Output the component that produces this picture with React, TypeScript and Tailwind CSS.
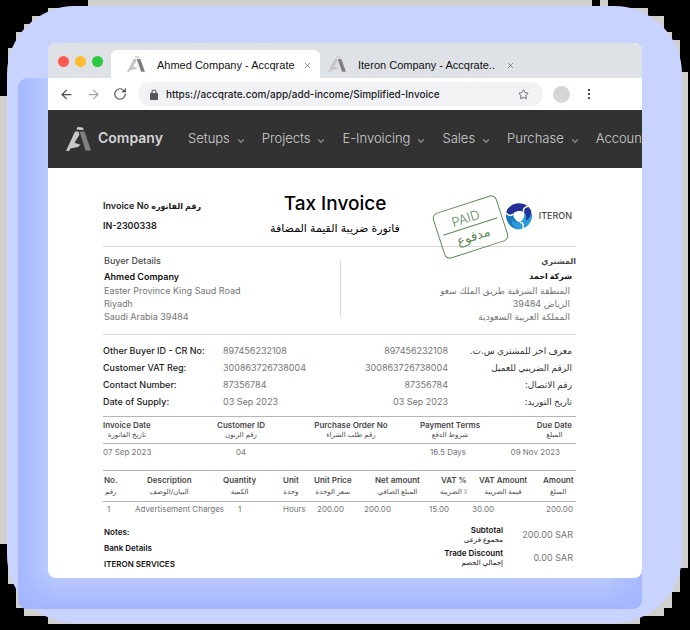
import React from "react";
import { ArrowLeft, ArrowRight, ChevronDown, EllipsisVertical, RotateCw, Star, X } from "lucide-react";

function AccqrateLogo({ className }: { className?: string }) {
  return (
    <svg viewBox="0 0 50 47" preserveAspectRatio="none" className={className} aria-hidden="true">
      <path d="M23 0L33 1L36 6L21 5z" fill="#d4d4d4" />
      <path d="M27 9L37 9L50 46H39z" fill="#808080" />
      <path d="M18 9L25 9L27 15L17 31L29 35L24 39L9 42L6 47H0z" fill="#c6c6c6" />
    </svg>
  );
}

const blade = "M-25 -9A27 27 0 0 1 24 -11C25 -3 22 5 14 9C17 -3 10 -11 -1 -10C-9 -9 -12 -5 -14 -2C-19 -1 -24 -4 -25 -9z";

function IteronLogo() {
  return (
    <svg viewBox="-28 -28 56 56" className="size-7 shrink-0" aria-hidden="true">
      <path d={blade} fill="#1878c0" transform="rotate(240)" />
      <path d={blade} fill="#2a9bd8" transform="rotate(120)" />
      <path d={blade} fill="#25309a" />
      <path
        d="M-26 -6C-21 0 -15 0 -12 -4"
        fill="none"
        stroke="#fff"
        strokeWidth="3"
      />
      <path d="M-26 -6C-21 0 -15 0 -12 -4" fill="none" stroke="#fff" strokeWidth="3" transform="rotate(120)" />
      <path d="M-26 -6C-21 0 -15 0 -12 -4" fill="none" stroke="#fff" strokeWidth="3" transform="rotate(240)" />
    </svg>
  );
}

function Backdrop() {
  return (
    <svg viewBox="0 0 690 630" preserveAspectRatio="none" className="absolute inset-0 -z-10 size-full" aria-hidden="true">
      <defs>
        <linearGradient id="shadeSides" x1="0" x2="1" y1="0" y2="0">
          <stop offset="0" stopColor="#a5b8ff" />
          <stop offset="0.06" stopColor="#bfccff" />
          <stop offset="0.94" stopColor="#bfccff" />
          <stop offset="1" stopColor="#a9bbff" />
        </linearGradient>
        <linearGradient id="shadeBottom" x1="0" x2="0" y1="0" y2="1">
          <stop offset="0" stopColor="#a0b4ff" stopOpacity="0" />
          <stop offset="1" stopColor="#a0b4ff" stopOpacity="0.9" />
        </linearGradient>
      </defs>
      <path fill="#000" d="M0 0H690V630H0z" />
      <path
        fill="#d0d0ce"
        d="M88 0H592V8H600V0H608V8H648V16H664V32H672V40H680V72H688V568H680V592H672V608H664V616H640V624H48V616H24V608H16V584H8V544H0V96H8V48H16V32H24V24H32V16H48V8H88z"
      />
      <rect x="7" y="6" width="675" height="617" rx="68" fill="#c8d3ff" />
      <rect x="18" y="78" width="624" height="531" rx="10" fill="url(#shadeSides)" />
      <path d="M18 570H642V599Q642 609 632 609H28Q18 609 18 599z" fill="url(#shadeBottom)" />
    </svg>
  );
}

function Tab({ title, active }: { title: string; active?: boolean }) {
  return (
    <div className={`flex h-7 items-center pr-2 ${active ? "w-[209px] rounded-t-md bg-white pl-4" : "w-[203px] pl-2"}`}>
      <AccqrateLogo className="h-4 w-[18px] shrink-0" />
      <button className="ml-3 grow pt-0.5 text-left font-['Liberation_Sans',sans-serif] text-[11px] whitespace-nowrap text-[#111]">
        {title}
      </button>
      <button aria-label={`Close ${title}`} className="pt-0.5 text-[#6b6e73]">
        <X size={9} strokeWidth={2} />
      </button>
    </div>
  );
}

function BrowserChrome() {
  return (
    <>
      <div className="flex h-[35px] items-end bg-[#dee1e6]">
        <div className="flex h-full w-[63px] shrink-0 items-center gap-[6px] pt-0.5 pl-[10px]">
          <span className="size-[11px] rounded-full bg-[#ff5a52]" />
          <span className="size-[11px] rounded-full bg-[#fdbb2d]" />
          <span className="size-[11px] rounded-full bg-[#2bc840]" />
        </div>
        <Tab title="Ahmed Company - Accqrate" active />
        <Tab title="Iteron Company - Accqrate.." />
      </div>
      <div className="flex h-8 items-center bg-white pl-[11px]">
        <div className="flex w-[79px] shrink-0 items-center gap-3">
          <button aria-label="Back" className="text-[#4a4c50]"><ArrowLeft size={15} /></button>
          <button aria-label="Forward" className="text-[#a6a8ab]"><ArrowRight size={15} /></button>
          <button aria-label="Reload" className="text-[#4a4c50]"><RotateCw size={14} /></button>
        </div>
        <div className="flex h-6 w-[405px] items-center rounded-full bg-[#f0f2f4] pr-[14px] pl-3">
          <svg viewBox="0 0 8 11" className="h-[11px] w-2 shrink-0" aria-hidden="true">
            <path d="M2 5V3a2 2 0 0 1 4 0v2" fill="none" stroke="#55585d" strokeWidth="1.2" />
            <rect y="4" width="8" height="7" rx="1" fill="#55585d" />
          </svg>
          <input
            aria-label="Address"
            readOnly
            value="https://accqrate.com/app/add-income/Simplified-Invoice"
            className="ml-2 min-w-0 grow bg-transparent text-[10px] font-medium text-[#202124] outline-none"
          />
          <button aria-label="Bookmark" className="text-[#5f6368]"><Star size={11} /></button>
        </div>
        <span className="ml-[10px] size-[17px] rounded-full bg-[#d5d7d6]" />
        <button aria-label="Menu" className="ml-3 text-[#4a4c50]"><EllipsisVertical size={14} /></button>
      </div>
    </>
  );
}

const menus = ["Setups", "Projects", "E-Invoicing", "Sales", "Purchase", "Accounts"];

function NavBar() {
  return (
    <nav className="flex h-[58px] items-center overflow-hidden bg-[#323232] pl-[18px] whitespace-nowrap">
      <AccqrateLogo className="h-6 w-[25px] shrink-0" />
      <span className="ml-[7px] w-[90px] shrink-0 pb-1 text-[14px] font-semibold text-[#d4d4d4]">Company</span>
      <div className="flex gap-4">
        {menus.map((name) => (
          <button key={name} className="flex shrink-0 items-center gap-[6px] text-[13px] font-light text-[#d0d0d0]">
            {name}
            <ChevronDown size={10} strokeWidth={3} className="mt-1 text-[#8c8c8c]" />
          </button>
        ))}
      </div>
    </nav>
  );
}

function InvoiceHeader() {
  return (
    <header className="flex h-[79px] border-b border-[#d9d9d9] pt-6">
      <div className="w-[150px] shrink-0 pt-1 text-[9px] leading-[19px] font-semibold text-[#1c1c1c]">
        <p className="whitespace-nowrap">
          Invoice No <span lang="ar" className="text-[8px]">رقم الفاتوره</span>
        </p>
        <p>IN-2300338</p>
      </div>
      <div className="grow text-center whitespace-nowrap text-black">
        <h1 className="text-[19px] leading-6 font-medium">Tax Invoice</h1>
        <p lang="ar" dir="rtl" className="text-[11px] leading-6">فاتورة ضريبة القيمة المضافة</p>
      </div>
      <div className="relative w-[159px] shrink-0">
        <div className="absolute top-[11px] left-[20px] flex h-12 w-[67px] -rotate-18 flex-col rounded-md border border-[#5c8a55] text-center text-[#5c8a55]">
          <span className="mx-1 border-b border-[#5c8a55] pt-1 pr-1 text-[13px] leading-[18px] font-light">PAID</span>
          <span lang="ar" className="text-[13px] leading-[18px]">مدفوع</span>
        </div>
        <div className="flex items-center justify-end gap-[6px] pt-[10px] pr-1">
          <IteronLogo />
          <span className="text-[9px] font-medium text-[#4a4a4a]">ITERON</span>
        </div>
      </div>
    </header>
  );
}

function Parties() {
  return (
    <section className="flex border-b border-[#d9d9d9] pt-[6px] pb-[11px] text-[9px] leading-[13px] text-[#757575]">
      <div className="flex-1 pl-px">
        <h2 className="leading-4 font-medium text-[#4a4a4a]">Buyer Details</h2>
        <h3 className="leading-[15px] font-semibold text-[#111]">Ahmed Company</h3>
        <p>Easter Province King Saud Road</p>
        <p>Riyadh</p>
        <p>Saudi Arabia 39484</p>
      </div>
      <div className="mt-[7px] mb-[6px] w-px bg-[#d9d9d9]" />
      <div lang="ar" dir="rtl" className="flex-1">
        <h2 className="text-[8px] leading-4 font-semibold text-[#4a4a4a]">المشتري</h2>
        <h3 className="pr-1 text-[8px] leading-[15px] font-bold text-[#111]">شركة احمد</h3>
        <div className="pr-[6px]">
          <p>المنطقة الشرقية طريق الملك سعو</p>
          <p>الرياض 39484</p>
          <p>المملكة العربية السعودية</p>
        </div>
      </div>
    </section>
  );
}

const identifiers = [
  ["Other Buyer ID - CR No:", "897456232108", "معرف اخر للمشتري س.ت."],
  ["Customer VAT Reg:", "300863726738004", "الرقم الضريبي للعميل"],
  ["Contact Number:", "87356784", "رقم الاتصال:"],
  ["Date of Supply:", "03 Sep 2023", "تاريخ التوريد:"],
];

function Identifiers() {
  return (
    <table className="mt-[7px] mb-[6px] w-full table-fixed text-[9px] leading-[17px] whitespace-nowrap text-[#757575]">
      <colgroup>
        <col className="w-[120px]" />
        <col />
        <col className="w-[110px]" />
        <col className="w-[125px]" />
      </colgroup>
      <tbody>
        {identifiers.map(([label, value, arabic]) => (
          <tr key={label}>
            <th scope="row" className="p-0 text-left font-medium text-[#1c1c1c]">{label}</th>
            <td className="p-0">{value}</td>
            <td className="p-0 pr-[3px] text-right">{value}</td>
            <th scope="row" lang="ar" dir="rtl" className="p-0 pr-1 text-right font-medium text-[#333]">{arabic}</th>
          </tr>
        ))}
      </tbody>
    </table>
  );
}

const summary = [
  { en: "Invoice Date", ar: "تاريخ الفاتورة", value: "07 Sep 2023", width: "w-[96px]", align: "text-left", pad: "" },
  { en: "Customer ID", ar: "رقم الزبون", value: "04", width: "w-[84px]", align: "text-center", pad: "" },
  { en: "Purchase Order No", ar: "رقم طلب الشراء", value: "", width: "w-auto", align: "text-center", pad: "" },
  { en: "Payment Terms", ar: "شروط الدفع", value: "16.5 Days", width: "w-[62px]", align: "text-center", pad: "pr-1" },
  { en: "Due Date", ar: "المبلغ", value: "09 Nov 2023", width: "w-[95px]", align: "text-right", pad: "pr-4" },
];

function Summary() {
  return (
    <table className="w-full table-fixed whitespace-nowrap">
      <thead>
        <tr className="h-[27px] border-y border-[#b5b5b5] text-[8px] leading-[9px] text-[#4a4a4a]">
          {summary.map((c) => (
            <th key={c.en} className={`p-0 ${c.width} ${c.align} font-semibold`}>
              <span className={`inline-block text-center align-middle ${c.en === "Due Date" ? "pr-1" : ""}`}>
                {c.en}
                <span lang="ar" className="block text-[7px] font-normal">{c.ar}</span>
              </span>
            </th>
          ))}
        </tr>
      </thead>
      <tbody>
        <tr className="h-[17px] text-[8px] text-[#757575]">
          {summary.map((c) => (
            <td key={c.en} className={`p-0 ${c.align} ${c.pad}`}>{c.value}</td>
          ))}
        </tr>
      </tbody>
    </table>
  );
}

const items = [
  { en: "No.", ar: "رقم", value: "1", width: "w-[32px]", head: "pl-px", cell: "pl-1" },
  { en: "Description", ar: "البيان/الوصف", value: "Advertisement Charges", width: "w-[87px]", head: "pl-3", cell: "pl-0" },
  { en: "Quantity", ar: "الكمية", value: "1", width: "w-[61px]", head: "pl-px", cell: "pl-4" },
  { en: "Unit", ar: "وحدة", value: "Hours", width: "w-[31px]", head: "pl-0", cell: "pl-0" },
  { en: "Unit Price", ar: "سعر الوحدة", value: "200.00", width: "w-[49px]", head: "pl-0", cell: "pl-[3px]" },
  { en: "Net amount", ar: "المبلغ الصافي", value: "200.00", width: "w-auto", head: "pl-3", cell: "pl-px" },
  { en: "VAT %", ar: "٪ الضريبة", value: "15.00", width: "w-[43px]", head: "pl-3", cell: "pl-px" },
  { en: "VAT Amount", ar: "قيمة الضريبة", value: "30.00", width: "w-[72px]", head: "pl-2", cell: "pl-px" },
  { en: "Amount", ar: "المبلغ", value: "200.00", width: "w-[33px]", head: "pl-0", cell: "pl-[3px]" },
];

function Items() {
  return (
    <table className="mt-[9px] w-full table-fixed text-left whitespace-nowrap">
      <thead>
        <tr className="h-[31px] border-y border-[#b5b5b5] text-[8px] leading-[11px] text-[#4a4a4a]">
          {items.map((c) => (
            <th key={c.en} className={`p-0 ${c.width} ${c.head} font-semibold`}>
              <span className="inline-block text-center align-middle">
                {c.en}
                <span lang="ar" dir="rtl" className="block text-[7px] font-normal">{c.ar}</span>
              </span>
            </th>
          ))}
        </tr>
      </thead>
      <tbody>
        <tr className="h-4 text-[8px] text-[#757575]">
          {items.map((c) => (
            <td key={c.en} className={`p-0 ${c.cell}`}>{c.value}</td>
          ))}
        </tr>
      </tbody>
    </table>
  );
}

const totals = [
  ["Subtotal", "مجموع فرعى", "200.00 SAR"],
  ["Trade Discount", "إجمالي الخصم", "0.00 SAR"],
];

function Footer() {
  return (
    <footer className="flex justify-between pt-[6px] pb-[6px] text-[8px] font-semibold text-[#111]">
      <div className="pt-px pl-px leading-4">
        <p>Notes:</p>
        <p>Bank Details</p>
        <p>ITERON SERVICES</p>
      </div>
      <dl className="pr-[3px]">
        {totals.map(([en, ar, amount]) => (
          <div key={en} className="flex h-[23px] items-center justify-end">
            <dt className="text-right leading-[10px]">
              {en}
              <span lang="ar" className="block text-[7px] font-medium">{ar}</span>
            </dt>
            <dd className="w-[70px] text-right text-[9px] font-normal text-[#757575]">{amount}</dd>
          </div>
        ))}
      </dl>
    </footer>
  );
}

export default function App() {
  return (
    <div className="relative isolate px-12 pt-[43px] pb-[52px] font-['Inter','Noto_Sans','DejaVu_Sans',sans-serif]">
      <Backdrop />
      <main className="overflow-hidden rounded-lg bg-white">
        <BrowserChrome />
        <NavBar />
        <article className="pr-[66px] pl-[55px]">
          <InvoiceHeader />
          <Parties />
          <Identifiers />
          <Summary />
          <Items />
          <Footer />
        </article>
      </main>
    </div>
  );
}
